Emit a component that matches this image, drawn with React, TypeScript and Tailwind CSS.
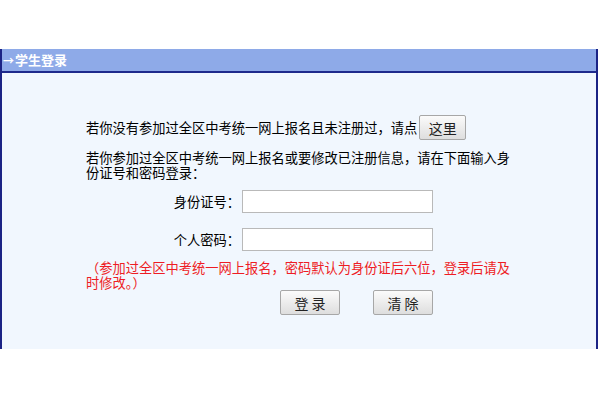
export default function App() {
  const font = "font-['Noto_Sans_CJK_SC','Noto_Sans',sans-serif]";
  const btn =
    'h-[25px] rounded-[2px] border border-[#a7a7a7] bg-gradient-to-b from-[#fbfbfb] to-[#dedede] text-[14px] text-[#222] leading-none';

  return (
    <div className={`w-[600px] h-[400px] bg-white pt-[49px] ${font}`}>
      <div className="w-[598px] border-x-2 border-[#1b2385]">
        {/* title bar */}
        <div className="h-[22px] bg-[#8eaae8] flex items-center pl-[1px] text-[13px] font-bold text-white border-b-2 border-[#1e2a8c] box-content">
          <span className="text-[11px] mr-[1px]">→</span>学生登录
        </div>

        {/* body */}
        <div className="h-[276px] bg-[#f1f7fe] pl-[84px] pt-[42px] text-[13.25px] text-black">
          <div className="flex items-center h-[25px]">
            <span>若你没有参加过全区中考统一网上报名且未注册过，请点</span>
            <button className={`${btn} w-[47px] ml-[2px]`}>这里</button>
          </div>

          <p className="w-[430px] mt-[10px] leading-[15px]">
            若你参加过全区中考统一网上报名或要修改已注册信息，请在下面输入身份证号和密码登录：
          </p>

          <div className="flex items-center mt-[10px]">
            <span className="w-[154px] text-right">身份证号：</span>
            <input className="ml-[2px] w-[191px] h-[23px] bg-white border border-[#b9b9b9] outline-none" />
          </div>
          <div className="flex items-center mt-[15px]">
            <span className="w-[154px] text-right">个人密码：</span>
            <input
              type="password"
              className="ml-[2px] w-[191px] h-[23px] bg-white border border-[#b9b9b9] outline-none"
            />
          </div>

          <p className="w-[430px] mt-[9px] leading-[15px] text-[#ee1c24]">
            （参加过全区中考统一网上报名，密码默认为身份证后六位，登录后请及时修改。）
          </p>

          <div className="flex ml-[194px] gap-[33px]">
            <button className={`${btn} w-[60px]`}>登 录</button>
            <button className={`${btn} w-[60px]`}>清 除</button>
          </div>
        </div>
      </div>
    </div>
  );
}
